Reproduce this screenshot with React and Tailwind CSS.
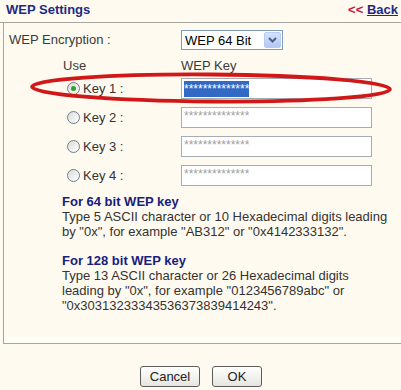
import React from "react";

function Radio({ checked }) {
  return (
    <div className="w-[13px] h-[13px] rounded-full border border-[#6f7f8f] bg-gradient-to-br from-[#dcdcd6] to-white flex items-center justify-center shrink-0">
      {checked && <div className="w-[5px] h-[5px] rounded-full bg-[#2aa52a]" />}
    </div>
  );
}

function KeyRow({ n, checked }) {
  return (
    <div className="flex items-center h-[21px]">
      <div className="w-[172px] flex items-center pl-[58px] gap-[3px]">
        <Radio checked={checked} />
        <span className="text-[13px] text-[#333] leading-none">Key {n} :</span>
      </div>
      <div className="w-[191px] h-[21px] border border-[#a5acb2] bg-white flex items-start pl-[2px] pt-[2px]">
        {checked ? (
          <span className="bg-[#316ac5] text-white text-[12px] leading-[16px] h-[16px] w-[65px] overflow-hidden whitespace-nowrap">**************</span>
        ) : (
          <span className="text-[#a0a0a0] text-[12px] leading-[13px] w-[65px] overflow-hidden whitespace-nowrap">**************</span>
        )}
      </div>
    </div>
  );
}

export default function App() {
  return (
    <div className="relative w-[401px] h-[390px] bg-[#fffaef] overflow-hidden font-['Liberation_Sans',Arial,sans-serif]">
      {/* header */}
      <div className="h-[23px] border-b border-[#a6a6a0] flex items-start justify-between pl-[6px] pr-[3px] pt-[2px]">
        <span className="text-[13px] font-bold text-[#1c2a84] leading-[16px]">WEP Settings</span>
        <span className="text-[13px] font-bold leading-[16px]">
          <span className="text-[#c41a3a]">&lt;&lt;</span>{" "}
          <span className="text-[#1c2a84] underline">Back</span>
        </span>
      </div>

      {/* box */}
      <div className="ml-[3px] h-[321px] border-l border-b border-[#a6a6a0] flex flex-col">
        <div className="flex items-center mt-[7px] h-[20px]">
          <div className="w-[177px] pl-[5px] text-[13px] text-[#3a3a3a]">WEP Encryption :</div>
          <div className="w-[102px] h-[20px] border border-[#7f9db9] bg-white flex items-center justify-between pl-[3px] pr-[1px]">
            <span className="text-[13px] text-black leading-none">WEP 64 Bit</span>
            <div className="w-[17px] h-[16px] rounded-[2px] bg-gradient-to-b from-[#d4e2fc] to-[#b4c8f4] border border-[#b8ccf4] flex items-center justify-center">
              <svg width="9" height="6" viewBox="0 0 9 6">
                <path d="M1 1 L4.5 4.5 L8 1" stroke="#4d6185" strokeWidth="2" fill="none" />
              </svg>
            </div>
          </div>
        </div>

        <div className="flex items-center h-[18px] mt-[7px] text-[13px] text-[#3a3a3a]">
          <div className="w-[177px] pl-[59px]">Use</div>
          <div>WEP Key</div>
        </div>

        <div className="relative flex flex-col gap-[8px] mt-[3px] pl-[5px]">
          <KeyRow n={1} checked />
          <KeyRow n={2} />
          <KeyRow n={3} />
          <KeyRow n={4} />
          <svg className="absolute left-[24px] top-[-6px] pointer-events-none" width="366" height="34" viewBox="0 0 366 34">
            <ellipse cx="183" cy="16" rx="179" ry="13.5" transform="rotate(0.4 183 16)" fill="none" stroke="#d01818" strokeWidth="3.8" />
          </svg>
        </div>

        <div className="ml-[58px] mt-[8px] text-[13px] leading-[15px]">
          <div className="font-bold text-[#17207e]">For 64 bit WEP key</div>
          <div className="text-[#333]">
            Type 5 ASCII character or 10 Hexadecimal digits leading
            <br />
            by "0x", for example "AB312" or "0x4142333132".
          </div>
          <div className="font-bold text-[#17207e] mt-[14px]">For 128 bit WEP key</div>
          <div className="text-[#333]">
            Type 13 ASCII character or 26 Hexadecimal digits
            <br />
            leading by "0x", for example "0123456789abc" or
            <br />
            "0x30313233343536373839414243".
          </div>
        </div>
        <div className="mt-auto h-[6px] bg-[#fffef9]" />
      </div>

      {/* buttons */}
      <div className="flex justify-center gap-[12px] mt-[22px] pl-[1px]">
        <button className="w-[60px] h-[21px] rounded-[3px] border border-[#5c5c5c] bg-gradient-to-b from-white to-[#e6e6e0] text-[13px] text-[#222] leading-none">Cancel</button>
        <button className="w-[50px] h-[21px] rounded-[3px] border border-[#5c5c5c] bg-gradient-to-b from-white to-[#e6e6e0] text-[13px] text-[#222] leading-none">OK</button>
      </div>
    </div>
  );
}
